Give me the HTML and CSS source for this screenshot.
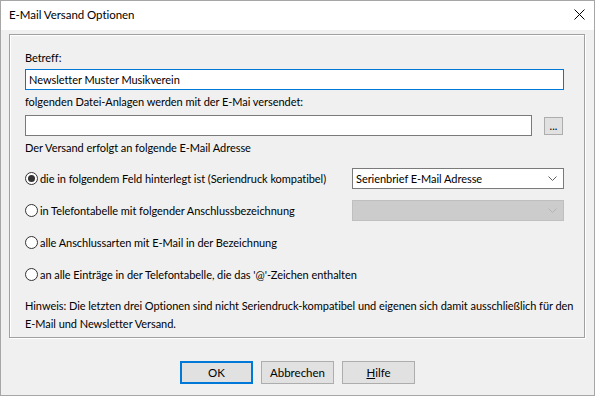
FILE: index.html
```html
<!DOCTYPE html>
<html lang="de">
<head>
    <meta charset="UTF-8">
    <title>E-Mail Versand Optionen</title>
    <link rel="stylesheet" href="styles.css">
</head>
<body>
    <div class="window">
        <div class="titlebar">
            <span class="title">E-Mail Versand Optionen</span>
            <svg class="close" width="11" height="11" viewBox="0 0 11 11">
                <path d="M0.5 0.5 L10.5 10.5 M10.5 0.5 L0.5 10.5" stroke="#000" stroke-width="1" fill="none"/>
            </svg>
        </div>
        <div class="content">
            <div class="group">
                <div class="label">Betreff:</div>
                <div class="textbox focused">Newsletter Muster Musikverein</div>

                <div class="label label-gap">folgenden Datei-Anlagen werden mit der E-Mai versendet:</div>
                <div class="file-row">
                    <div class="textbox file"></div>
                    <button class="small-btn">...</button>
                </div>

                <div class="label label-gap">Der Versand erfolgt an folgende E-Mail Adresse</div>

                <div class="option first">
                    <span class="radio checked"></span>
                    <span>die in folgendem Feld hinterlegt ist (Seriendruck kompatibel)</span>
                    <div class="combo">
                        <span>Serienbrief E-Mail Adresse</span>
                        <svg width="9" height="5" viewBox="0 0 9 5"><path d="M0.5 0.5 L4.5 4.5 L8.5 0.5" stroke="#606060" fill="none"/></svg>
                    </div>
                </div>
                <div class="option">
                    <span class="radio"></span>
                    <span>in Telefontabelle mit folgender Anschlussbezeichnung</span>
                    <div class="combo disabled">
                        <span></span>
                        <svg width="9" height="5" viewBox="0 0 9 5"><path d="M0.5 0.5 L4.5 4.5 L8.5 0.5" stroke="#b4b4b4" fill="none"/></svg>
                    </div>
                </div>
                <div class="option">
                    <span class="radio"></span>
                    <span>alle Anschlussarten mit E-Mail in der Bezeichnung</span>
                </div>
                <div class="option">
                    <span class="radio"></span>
                    <span>an alle Einträge in der Telefontabelle, die das '@'-Zeichen enthalten</span>
                </div>

                <p class="hint">Hinweis: Die letzten drei Optionen sind nicht Seriendruck-kompatibel und eigenen sich damit ausschließlich für den<br>E-Mail und Newsletter Versand.</p>
            </div>

            <div class="buttons">
                <button class="btn default">OK</button>
                <button class="btn">Abbrechen</button>
                <button class="btn"><u>H</u>ilfe</button>
            </div>
        </div>
    </div>
</body>
</html>
```

FILE: styles.css
```css
body {
    margin: 0;
    padding: 0;
    background-color: #f0f0f0;
    font-family: Lato, "Noto Sans", sans-serif;
    font-size: 11px;
    letter-spacing: -0.05px;
    color: #000;
}
.window {
    width: 595px;
    height: 396px;
    box-sizing: border-box;
    border: 1px solid #a6a6a6;
    background-color: #f0f0f0;
    display: flex;
    flex-direction: column;
}
.titlebar {
    height: 29px;
    background-color: #fff;
    display: flex;
    align-items: center;
    justify-content: space-between;
    padding: 0 9px 0 8px;
}
.title {
    font-size: 11.5px;
    line-height: 16px;
    margin-top: -1px;
}
.close {
    margin-top: -2px;
}
.content {
    padding: 4px 9px 0 8px;
}
.group {
    height: 304px;
    box-sizing: border-box;
    border: 1px solid #a0a0a0;
    box-shadow: inset 1px 1px 0 #fff, 1px 1px 0 #fff;
    padding: 15px 20px 0 15px;
}
.label {
    line-height: 16px;
    height: 16px;
    white-space: nowrap;
}
.label-gap {
    margin-top: 4px;
}
.textbox {
    height: 21px;
    box-sizing: border-box;
    border: 1px solid #7a7a7a;
    background-color: #fff;
    padding: 0 3px;
    line-height: 19px;
    margin-top: 3px;
}
.textbox.focused {
    border-color: #0078d7;
}
.file-row {
    display: flex;
    align-items: center;
    margin-top: 5px;
}
.file-row .textbox {
    margin-top: 0;
    width: 507px;
}
.small-btn {
    width: 19px;
    height: 18px;
    margin-left: auto;
    margin-right: 1px;
    padding: 0;
    border: 1px solid #adadad;
    background-color: #e1e1e1;
    font-family: inherit;
    font-size: 11px;
    line-height: 12px;
    color: #000;
}
.option {
    height: 21px;
    display: flex;
    align-items: center;
    margin-top: 11px;
    white-space: nowrap;
}
.option.first {
    margin-top: 12px;
}
.radio {
    width: 13px;
    height: 13px;
    box-sizing: border-box;
    border: 1px solid #333;
    border-radius: 50%;
    background-color: #fff;
    margin-right: 2px;
    display: flex;
    align-items: center;
    justify-content: center;
    flex-shrink: 0;
}
.radio.checked::after {
    content: "";
    width: 7px;
    height: 7px;
    border-radius: 50%;
    background-color: #333;
}
.combo {
    width: 212px;
    height: 21px;
    box-sizing: border-box;
    margin-left: auto;
    border: 1px solid #7a7a7a;
    background-color: #fff;
    display: flex;
    align-items: center;
    justify-content: space-between;
    padding: 0 6px 0 3px;
}
.combo.disabled {
    background-color: #cccccc;
    border-color: #bfbfbf;
}
.hint {
    margin: 12px 0 0 0;
    line-height: 18px;
    white-space: nowrap;
}
.buttons {
    display: flex;
    justify-content: center;
    gap: 8px;
    margin-top: 23px;
    padding-left: 1px;
}
.btn {
    width: 73px;
    height: 23px;
    box-sizing: border-box;
    border: 1px solid #adadad;
    background-color: #e1e1e1;
    font-family: inherit;
    font-size: 11.5px;
    color: #000;
    padding: 0;
}
.btn.default {
    border: 2px solid #0078d7;
}
```
